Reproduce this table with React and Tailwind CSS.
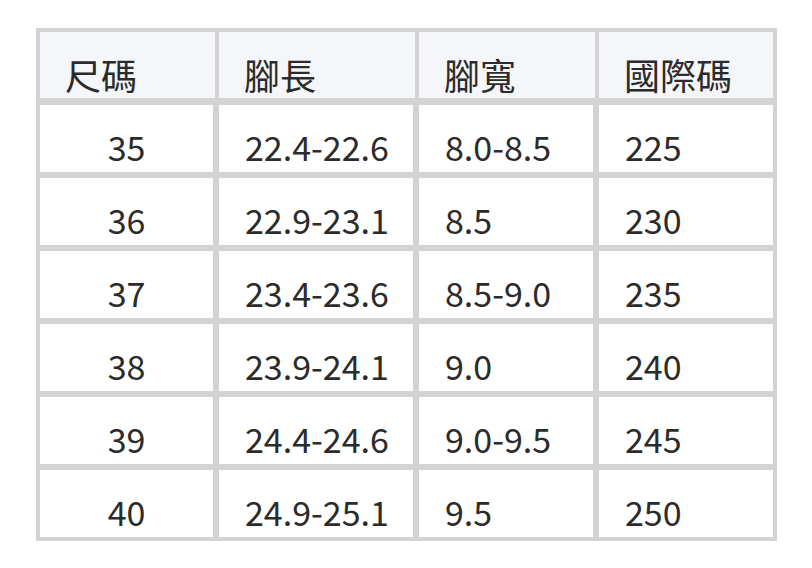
import React from 'react';

const rows = [
  ['35', '22.4-22.6', '8.0-8.5', '225'],
  ['36', '22.9-23.1', '8.5', '230'],
  ['37', '23.4-23.6', '8.5-9.0', '235'],
  ['38', '23.9-24.1', '9.0', '240'],
  ['39', '24.4-24.6', '9.0-9.5', '245'],
  ['40', '24.9-25.1', '9.5', '250'],
];

const cols = 'grid grid-cols-[175px_196px_176px_174px] gap-x-1';

function App() {
  return (
    <div
      className="w-[812px] h-[568px] bg-white pl-[36px] pt-[28px] text-[#2b2b2b]"
      style={{ fontFamily: '"Noto Sans CJK TC", "Noto Sans", sans-serif' }}
    >
      <div className="w-[741px] bg-[#d3d3d3] p-1">
        {/* Header */}
        <div className={`${cols} mb-[7px]`}>
          {['尺碼', '腳長', '腳寬', '國際碼'].map((h) => (
            <div key={h} className="h-[66px] bg-[#f5f6fa] flex items-end pl-[25px] pb-[1px] text-[36px] leading-[46px]">
              {h}
            </div>
          ))}
        </div>

        {/* Body */}
        <div className="flex flex-col gap-[6px]">
          {rows.map((r) => (
            <div key={r[0]} className={cols}>
              {r.map((c, i) => (
                <div
                  key={i}
                  className={`h-[67px] bg-white flex items-end pb-[3px] text-[34px] leading-[44px] ${
                    i === 0 ? 'justify-center' : 'pl-[26px]'
                  } ${i < 3 ? 'border-r-2 border-[#d3d3d3]' : ''}`}
                >
                  {c}
                </div>
              ))}
            </div>
          ))}
        </div>
      </div>
    </div>
  );
}

export default App;
